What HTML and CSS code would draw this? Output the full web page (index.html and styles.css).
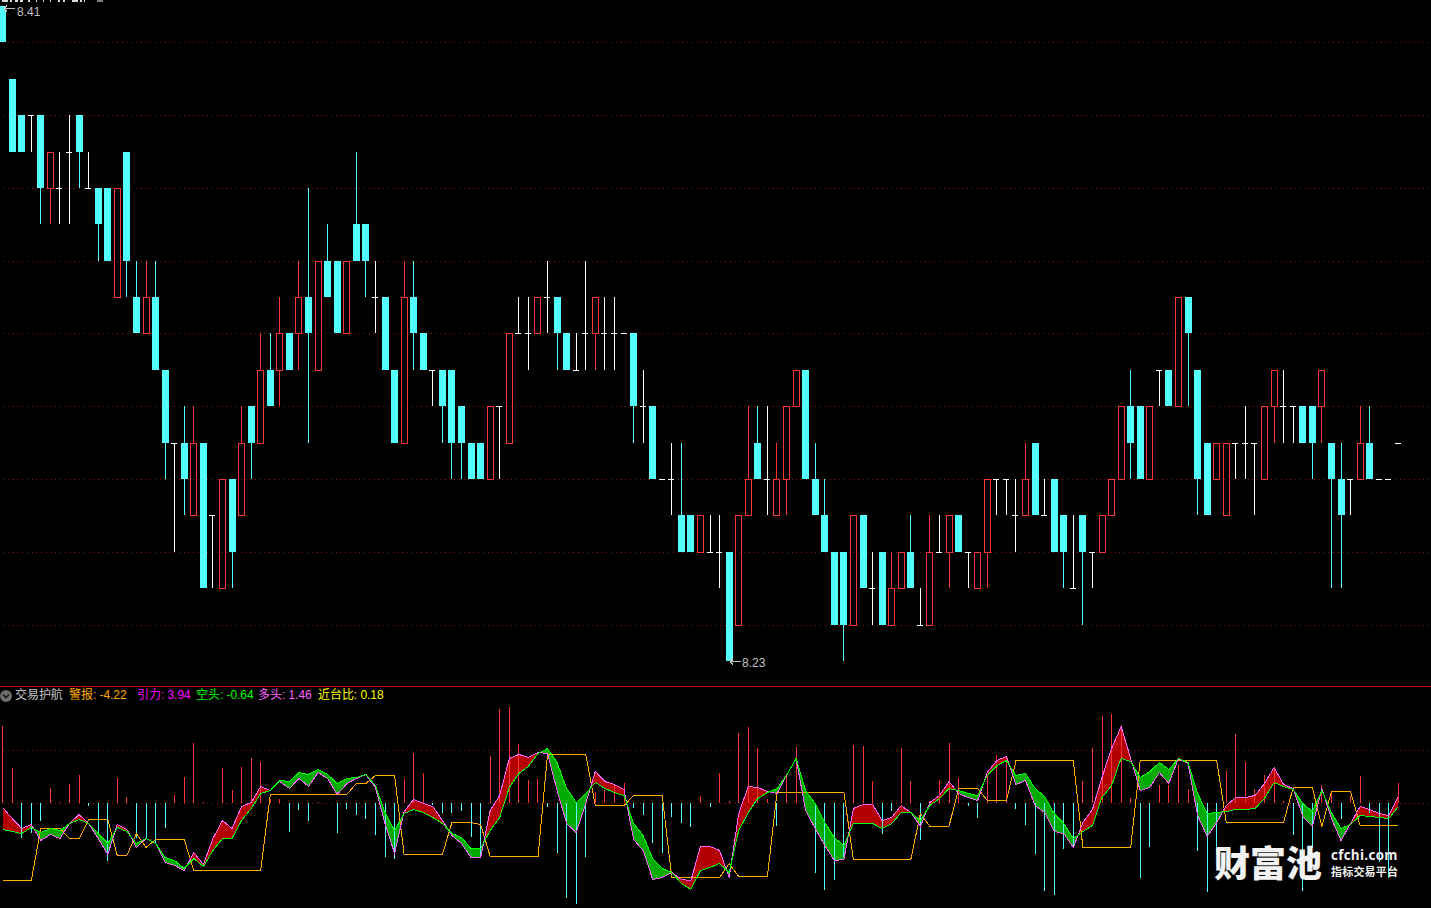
FILE: index.html
```html
<!DOCTYPE html>
<html lang="zh-CN">
<head>
<meta charset="utf-8">
<title>交易护航</title>
<link rel="stylesheet" href="styles.css">
</head>
<body>
<div class="terminal">
  <section class="price-pane">
    <svg id="price-chart" class="chart" width="1431" height="686" viewBox="0 0 1431 686"></svg>
    <span class="price-label high">8.41</span>
    <span class="price-label low">8.23</span>
  </section>
  <section class="indicator-pane">
    <div class="legend">
      <svg class="collapse" width="12" height="12" viewBox="0 0 12 12">
        <circle class="collapse-disc" cx="6" cy="6" r="6"></circle>
        <path class="collapse-mark" d="M3 4.5 L6 7.5 L9 4.5"></path>
      </svg>
      <span class="item name">交易护航</span>
      <span class="item warn">警报: -4.22</span>
      <span class="item pull">引力: 3.94</span>
      <span class="item bear">空头: -0.64</span>
      <span class="item bull">多头: 1.46</span>
      <span class="item near">近台比: 0.18</span>
    </div>
    <svg id="indicator-chart" class="chart" width="1431" height="204" viewBox="0 704 1431 204"></svg>
    <div class="brand">
      <span class="brand-name">财富池</span>
      <div class="brand-side">
        <span class="brand-url">cfchi.com</span>
        <span class="brand-tag">指标交易平台</span>
      </div>
    </div>
  </section>
</div>
<script src="chart.js"></script>
</body>
</html>
```
FILE: styles.css
```css
* { box-sizing: border-box; }
html, body { margin: 0; padding: 0; background: #000; }
body { width: 1431px; height: 908px; overflow: hidden; font-family: "Liberation Sans", "Noto Sans CJK SC", sans-serif; }
.terminal { display: flex; flex-direction: column; width: 1431px; height: 908px; background: #000; }
.price-pane { position: relative; height: 686px; flex: none; }
.chart { display: block; shape-rendering: crispEdges; }
.price-label { position: absolute; font-size: 12px; line-height: 14px; color: #c0c0c0; }
.price-label.high { left: 17px; top: 5px; }
.price-label.low { left: 742px; top: 656px; }
.indicator-pane { position: relative; flex: 1; border-top: 1px solid #c00000; }
.legend { display: flex; align-items: center; height: 17px; padding-left: 0; font-size: 12px; white-space: nowrap; }
.collapse { flex: none; margin-top: 1px; }
.collapse-disc { fill: #6e6e6e; }
.collapse-mark { fill: none; stroke: #1a1a1a; stroke-width: 1.6; }
.item { display: block; line-height: 17px; letter-spacing: -0.05px; }
.name { color: #c0c0c0; margin-left: 3px; width: 54px; }
.warn { color: #ffaa00; width: 68px; }
.pull { color: #ff00ff; width: 59px; }
.bear { color: #00ff00; width: 62px; }
.bull { color: #ff64ff; width: 60px; }
.near { color: #ffff00; }
.brand { position: absolute; left: 1214px; top: 153px; display: flex; align-items: center; gap: 9px; color: #f2f2f2; }
.brand-name { font-family: "Noto Sans CJK SC", sans-serif; font-weight: 900; font-size: 36px; line-height: 42px; letter-spacing: 0; }
.brand-side { display: flex; flex-direction: column; margin-top: 4px; }
.brand-url { font-family: "Open Sans", "Liberation Sans", sans-serif; font-weight: 700; font-size: 13.4px; line-height: 16px; letter-spacing: 0.3px; }
.brand-tag { font-family: "Noto Sans CJK SC", sans-serif; font-weight: 700; font-size: 11px; line-height: 17px; letter-spacing: 0.2px; }
.grid-line { stroke: #8a0f0f; stroke-width: 1; stroke-dasharray: 1 3.75; }
.body-fall { fill: #54ffff; }
.body-rise { fill: none; stroke: #ff3232; stroke-width: 1; }
.wick-fall { fill: #54ffff; }
.wick-rise { fill: #ff3232; }
.wick-flat { fill: #ffffff; }
.arrow { fill: none; stroke: #c0c0c0; stroke-width: 1; }
.top-cut { fill: #d8d8d8; }
.top-cut-dim { fill: #808080; }
.band-up { fill: #b40000; stroke: none; }
.band-down { fill: #00aa00; stroke: none; }
.bar-up { fill: #ff3232; }
.bar-down { fill: #54ffff; }
.line-orange { fill: none; stroke: #ffaa00; stroke-width: 1; }
.line-pink { fill: none; stroke: #ff64ff; stroke-width: 1; }
.line-green { fill: none; stroke: #00ff00; stroke-width: 1; }
```
FILE: chart.js
```js
(function () {
  var NS = 'http://www.w3.org/2000/svg';
  var LEVELS = [6, 42, 79, 115, 152, 188, 224, 261, 297, 333, 370, 406, 443, 479, 515, 552, 588, 625, 661];
  var cx = function (i) { return Math.floor(2.6 + 9.56 * i); };

  function add(svg, tag, cls, attrs) {
    var el = document.createElementNS(NS, tag);
    if (cls) el.setAttribute('class', cls);
    for (var k in attrs) el.setAttribute(k, attrs[k]);
    svg.appendChild(el);
    return el;
  }
  function rect(svg, cls, x, y, w, h) { add(svg, 'rect', cls, { x: x, y: y, width: w, height: h }); }

  // type, high, bodyTop, bodyBottom, low -- all as price levels; c fall, r rise, w flat
  var candles = [
    'c,0,0,1,1','c,2,2,4,4','c,3,3,4,4','w,3,3,3,4','c,3,3,5,6','r,4,4,5,6','w,4,5,5,6','w,3,4,4,6','c,3,3,4,5','w,4,5,5,5',
    'c,5,5,6,7','c,5,5,7,7','r,5,5,8,8','c,4,4,7,8','c,7,8,9,9','r,7,8,9,9','c,7,8,10,10','c,10,10,12,13','w,12,12,12,15','c,11,12,13,14',
    'r,11,12,14,14','c,12,12,16,16','w,14,14,14,16','r,13,13,16,16','c,13,13,15,16','r,11,12,14,14','c,11,11,12,13','r,9,10,12,12','c,9,10,11,11','r,8,9,10,11',
    'c,9,9,10,10','r,7,8,9,10','c,5,8,9,12','r,7,7,10,10','c,6,7,8,8','c,7,7,9,9','r,7,7,9,9','c,4,6,7,7','c,6,6,7,8','w,7,8,8,9',
    'c,8,8,10,10','c,10,10,12,12','r,7,8,12,12','c,7,8,9,10','c,9,9,10,10','w,10,10,10,11','c,10,10,11,12','c,10,10,12,13','c,11,11,12,13','c,12,12,13,13',
    'c,12,12,13,13','r,11,11,13,13','w,11,11,11,13','r,9,9,12,12','w,8,9,9,9','w,8,9,9,10','r,8,8,9,9','w,7,8,8,9','c,8,8,9,10','c,9,9,10,10',
    'w,9,10,10,10','w,7,9,9,10','r,8,8,9,10','w,8,9,9,10','w,8,9,9,10','w,9,9,9,9','c,9,9,11,12','w,10,11,11,12','c,11,11,13,13','w,13,13,13,13',
    'w,12,13,13,14','c,12,14,15,15','c,14,14,15,15','r,14,14,15,15','w,14,15,15,15','w,14,15,15,16','c,15,15,18,18','r,14,14,17,17','r,11,13,14,14','c,11,12,13,13',
    'w,11,13,13,14','r,12,13,14,14','r,11,11,13,14','r,10,10,11,11','c,10,10,13,13','c,12,13,14,14','c,13,14,15,15','c,15,15,17,17','c,15,15,17,18','r,14,14,17,17',
    'c,14,14,16,16','w,15,16,16,17','c,15,15,17,17','r,15,16,17,17','r,15,15,16,16','c,14,15,16,16','w,16,17,17,17','r,14,15,17,17','w,14,15,15,15','r,14,14,15,16',
    'c,14,14,15,15','w,15,15,15,16','r,15,15,16,16','r,13,13,15,16','w,13,13,13,14','w,13,13,13,14','w,13,14,14,15','r,12,13,14,14','c,12,12,14,14','w,13,14,14,14',
    'c,13,13,15,15','c,14,14,15,16','w,14,16,16,16','c,14,14,15,17','w,15,15,15,16','r,14,14,15,15','r,13,13,14,14','r,11,11,13,13','c,10,11,12,13','c,11,11,13,13',
    'r,11,11,13,13','w,10,10,10,11','c,10,10,11,11','r,8,8,11,11','c,8,8,9,11','c,10,10,13,14','c,12,12,14,14','r,12,12,13,13','r,12,12,14,14','w,12,12,12,13',
    'w,11,12,12,13','w,12,12,12,14','r,11,11,13,13','r,10,10,11,12','w,10,11,11,12','w,11,11,11,12','c,11,11,12,12','c,11,11,12,13','r,10,10,11,12','c,12,12,13,16',
    'c,12,13,14,16','w,13,13,13,14','r,11,12,13,13','c,11,12,13,13','w,13,13,13,13','w,13,13,13,13','w,12,12,12,12'
  ];

  // signed bar tips for the indicator: value is the far end's y; 0 means no bar
  var bars = [
    726,768,838,833,821,788,802,784,775,806,833,861,778,797,838,839,843,828,795,777,
    743,802,0,768,790,767,758,762,799,799,832,810,821,802,0,833,809,815,819,835,
    857,859,779,753,773,805,813,813,811,837,855,756,709,707,744,780,779,807,853,898,
    904,857,792,790,785,783,808,815,843,853,817,823,827,796,807,773,801,733,727,748,
    799,826,775,747,0,873,890,880,857,745,746,781,834,811,748,781,840,801,780,743,
    778,806,818,776,755,757,809,825,854,891,895,849,847,781,748,716,714,725,798,878,
    847,785,785,765,789,851,892,855,771,734,762,789,775,768,801,835,891,848,785,791,
    819,796,776,813,862,878,783
  ];
  var pink = [
    807,818,828,824,840,834,838,823,814,823,838,854,824,829,847,838,843,862,865,870,
    852,864,838,820,828,806,802,786,790,781,788,778,786,772,778,794,783,778,774,787,
    823,853,811,799,803,806,820,835,843,857,857,810,795,758,754,757,752,753,790,823,
    832,803,771,781,784,789,839,850,879,877,872,879,880,846,846,850,877,813,786,787,
    791,793,775,758,810,828,845,860,859,808,804,804,820,817,805,812,826,802,795,781,
    793,797,800,772,760,756,784,780,805,812,831,833,847,822,809,777,748,726,758,790,
    787,772,783,758,763,815,836,822,805,797,797,795,783,767,784,788,816,826,788,818,
    840,823,806,809,813,815,796
  ];
  var green = [
    829,831,833,827,832,828,830,823,819,823,833,843,827,831,843,838,843,857,860,868,
    858,866,850,838,838,820,808,793,790,780,781,772,774,769,774,783,778,777,774,785,
    812,830,813,809,812,817,823,833,837,848,848,830,817,787,773,766,753,748,762,788,
    802,793,782,788,792,795,823,835,858,868,872,883,889,870,867,863,872,830,812,798,
    792,788,775,758,790,803,822,837,845,823,823,823,828,823,812,812,820,805,798,788,
    790,793,795,775,765,760,775,773,788,796,813,823,838,831,825,797,785,758,761,777,
    771,762,769,758,762,793,813,812,811,809,809,808,798,782,786,789,803,811,790,812,
    828,824,815,816,817,818,806
  ];
  var orange = [
    880,880,880,880,828,828,828,838,838,819,819,819,855,855,833,847,839,839,839,839,
    870,870,870,870,870,870,870,870,794,794,794,794,794,794,794,794,794,783,783,775,
    775,775,854,854,854,854,854,822,822,822,824,856,856,856,856,856,856,754,754,754,
    754,754,805,805,805,805,795,795,795,795,877,877,877,877,877,877,863,876,876,876,
    876,792,792,792,792,792,792,792,792,859,859,859,859,859,859,859,813,826,826,826,
    788,788,788,800,800,800,760,760,760,760,760,760,760,847,847,847,847,847,847,760,
    760,760,760,760,760,760,760,760,822,822,822,822,822,822,822,787,787,787,826,791,
    791,791,825,825,825,825,825
  ];

  function gridLines(svg, ys) {
    ys.forEach(function (y) {
      add(svg, 'line', 'grid-line', { x1: 3, x2: 1431, y1: y + 0.5, y2: y + 0.5 });
    });
  }

  function drawPrice(svg) {
    gridLines(svg, [42, 115, 188, 261, 333, 406, 479, 552, 625]);
    candles.forEach(function (spec, i) {
      var p = spec.split(',');
      var x = cx(i);
      var hi = LEVELS[+p[1]], top = LEVELS[+p[2]], bot = LEVELS[+p[3]], lo = LEVELS[+p[4]];
      if (p[0] === 'w') {
        if (lo > hi) rect(svg, 'wick-flat', x, hi, 1, lo - hi);
        rect(svg, 'wick-flat', x - 3, top, 6, 1);
        return;
      }
      var wick = p[0] === 'c' ? 'wick-fall' : 'wick-rise';
      if (top > hi) rect(svg, wick, x, hi, 1, top - hi);
      if (lo > bot) rect(svg, wick, x, bot, 1, lo - bot);
      if (p[0] === 'c') rect(svg, 'body-fall', x - 3, top, 7, bot - top);
      else add(svg, 'rect', 'body-rise', { x: x - 2.5, y: top + 0.5, width: 6, height: bot - top });
    });
    // arrows beside the extreme prices
    add(svg, 'path', 'arrow', { d: 'M4 8.5H15M4 8.5L7 5.5M4 8.5L7 11.5' });
    add(svg, 'path', 'arrow', { d: 'M730 661.5H741M730 661.5L733 658.5M730 661.5L733 664.5' });
    // the foot of a title row that is cut off by the top edge
    [[2,6],[10,2],[15,3],[20,3],[28,2],[36,1],[43,1],[50,1],[58,2],[63,2],[72,6],[80,2],[84,1]].forEach(function (d) {
      rect(svg, 'top-cut', d[0], 0, d[1], 2);
    });
    rect(svg, 'top-cut-dim', 97, 0, 6, 2);
  }

  function pt(i, y) { return (2.6 + 9.56 * i).toFixed(1) + ',' + y; }

  function drawBands(svg) {
    for (var i = 0; i < pink.length - 1; i++) {
      var d0 = green[i] - pink[i], d1 = green[i + 1] - pink[i + 1];
      if (d0 === 0 && d1 === 0) continue;
      var x0 = 2.6 + 9.56 * i, x1 = x0 + 9.56;
      var f = function (x, y) { return x.toFixed(2) + ',' + y.toFixed(2); };
      if (d0 * d1 >= 0) {
        add(svg, 'polygon', (d0 + d1) > 0 ? 'band-up' : 'band-down', {
          points: [f(x0, pink[i]), f(x1, pink[i + 1]), f(x1, green[i + 1]), f(x0, green[i])].join(' ')
        });
      } else {
        var t = d0 / (d0 - d1);
        var xm = x0 + (x1 - x0) * t, ym = pink[i] + (pink[i + 1] - pink[i]) * t;
        add(svg, 'polygon', d0 > 0 ? 'band-up' : 'band-down', {
          points: [f(x0, pink[i]), f(xm, ym), f(x0, green[i])].join(' ')
        });
        add(svg, 'polygon', d1 > 0 ? 'band-up' : 'band-down', {
          points: [f(xm, ym), f(x1, pink[i + 1]), f(x1, green[i + 1])].join(' ')
        });
      }
    }
  }

  function polyline(svg, cls, ys) {
    add(svg, 'polyline', cls, { points: ys.map(function (y, i) { return pt(i, y + 0.5); }).join(' ') });
  }

  function drawIndicator(svg) {
    var ZERO = 803;
    gridLines(svg, [750, ZERO]);
    drawBands(svg);
    bars.forEach(function (tip, i) {
      if (!tip) return;
      if (tip < ZERO) rect(svg, 'bar-up', cx(i), tip, 1, ZERO - tip);
      else rect(svg, 'bar-down', cx(i), ZERO, 1, tip - ZERO);
    });
    polyline(svg, 'line-orange', orange);
    polyline(svg, 'line-pink', pink);
    polyline(svg, 'line-green', green);
  }

  drawPrice(document.getElementById('price-chart'));
  drawIndicator(document.getElementById('indicator-chart'));
})();
```
